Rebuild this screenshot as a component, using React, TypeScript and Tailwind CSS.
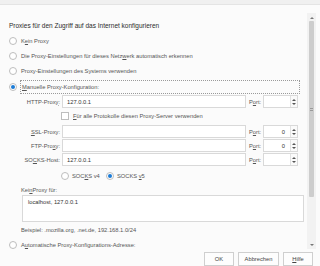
import React from "react";

const Radio = ({ checked = false }: { checked?: boolean }) => (
  <span className="flex h-[8px] w-[8px] shrink-0 items-center justify-center rounded-full border border-[#bdbdbd] bg-white">
    {checked && <span className="h-[4px] w-[4px] rounded-full bg-[#1b7bd6]" />}
  </span>
);

const Spinner = () => (
  <span className="flex h-full w-[7px] flex-col items-center justify-center gap-[2px] border-l border-[#e2e2e2] bg-[#fafafa]">
    <span className="h-0 w-0 border-x-[2px] border-b-[2px] border-x-transparent border-b-[#555]" />
    <span className="h-0 w-0 border-x-[2px] border-t-[2px] border-x-transparent border-t-[#555]" />
  </span>
);

const U = ({ children }: { children: React.ReactNode }) => (
  <u className="decoration-[0.5px] underline-offset-1">{children}</u>
);

const ProxyRow = ({
  label,
  value = "",
  port = "",
}: {
  label: React.ReactNode;
  value?: string;
  port?: string;
}) => (
  <div className="mt-[1px] flex h-[13px] items-center">
    <span className="w-[51px] text-right">{label}</span>
    <span className="ml-[2px] flex h-full w-[184px] items-center border border-[#d9d9d9] bg-white pl-[4px] text-[#333]">
      {value}
    </span>
    <span className="ml-[3px] w-[14px]">
      P<U>o</U>rt:
    </span>
    <span className="flex h-full w-[35px] items-center border border-[#d9d9d9] bg-white">
      <span className="flex-1 pr-[5px] text-right text-[#333]">{port}</span>
      <Spinner />
    </span>
  </div>
);

export default function App() {
  return (
    <div className="flex h-[266px] w-[320px] flex-col overflow-hidden bg-[#fbfbfb] font-['Liberation_Sans',Arial,sans-serif] text-[5.75px] leading-[8px] text-[#555]">
      <div className="h-[5px] shrink-0 border-b border-[#e4e4e4] bg-[#f0f0f0]" />

      <div className="flex h-[246px] shrink-0">
        <div className="flex-1 overflow-hidden pl-[9px]">
          <div className="mt-[14px] flex h-[14px] items-center text-[6.5px] text-[#2b2b2b]">
            Proxies für den Zugriff auf das Internet konfigurieren
          </div>

          <div className="flex h-[15px] items-center gap-[4px]">
            <Radio />
            <span>
              K<U>e</U>in Proxy
            </span>
          </div>
          <div className="flex h-[15px] items-center gap-[4px]">
            <Radio />
            <span>
              Die Proxy-Einstellungen für dieses Netz<U>w</U>erk automatisch erkennen
            </span>
          </div>
          <div className="flex h-[15px] items-center gap-[4px]">
            <Radio />
            <span>Proxy-Einstellungen des Systems verwenden</span>
          </div>
          <div className="mt-[2px] flex h-[14px] items-center gap-[3px]">
            <Radio checked />
            <span className="flex h-full w-[280px] items-center border border-dotted border-[#9a9a9a] pl-[1px]">
              <U>M</U>anuelle Proxy-Konfiguration:
            </span>
          </div>

          <ProxyRow
            label={
              <>
                HTTP-Prox<U>y</U>:
              </>
            }
            value="127.0.0.1"
          />
          <div className="flex h-[16px] items-center gap-[4px] pl-[52px]">
            <span className="h-[8px] w-[8px] border border-[#bdbdbd] bg-white" />
            <span>
              <U>F</U>ür alle Protokolle diesen Proxy-Server verwenden
            </span>
          </div>
          <ProxyRow
            label={
              <>
                <U>S</U>SL-Proxy:
              </>
            }
            port="0"
          />
          <ProxyRow
            label={
              <>
                FTP-Pro<U>x</U>y:
              </>
            }
            port="0"
          />
          <ProxyRow
            label={
              <>
                SO<U>C</U>KS-Host:
              </>
            }
            value="127.0.0.1"
          />

          <div className="mt-[2px] flex h-[16px] items-center pl-[52px]">
            <Radio />
            <span className="ml-[3px] w-[34px]">
              SOC<U>K</U>S v4
            </span>
            <Radio checked />
            <span className="ml-[3px]">
              SOCKS <U>v</U>5
            </span>
          </div>

          <div className="flex h-[11px] items-center pl-[12px]">
            Kei<U>n</U> Proxy für:
          </div>
          <div className="ml-[13px] h-[27px] w-[282px] border border-[#d9d9d9] bg-white px-[5px] pt-[2px] text-[#333]">
            localhost, 127.0.0.1
          </div>
          <div className="flex h-[15px] items-center pl-[12px]">
            Beispiel: .mozilla.org, .net.de, 192.168.1.0/24
          </div>
          <div className="flex h-[15px] items-center gap-[4px]">
            <Radio />
            <span>
              A<U>u</U>tomatische Proxy-Konfigurations-Adresse:
            </span>
          </div>
        </div>

        <div className="mr-[4px] mt-[8px] flex h-[236px] w-[9px] flex-col items-center bg-[#f2f2f2]">
          <span className="mt-[4px] h-0 w-0 border-x-[2px] border-b-[2px] border-x-transparent border-b-[#777]" />
          <div className="mt-[2px] flex h-[176px] w-[5px] items-center justify-center rounded-[1px] bg-[#cdcdcd]">
            <span className="h-[3px] w-[3px] border-y border-[#999]" />
          </div>
          <span className="mt-auto mb-[3px] h-0 w-0 border-x-[2px] border-t-[2px] border-x-transparent border-t-[#777]" />
        </div>
      </div>

      <div className="flex h-[15px] shrink-0 justify-end gap-[4px] pr-[7px] pt-[1px]">
        <button className="h-[14px] w-[30px] border border-[#cfcfcf] bg-[#fdfdfd] text-[5.75px] leading-[12px] text-[#444]">
          OK
        </button>
        <button className="h-[14px] w-[41px] border border-[#cfcfcf] bg-[#fdfdfd] text-[5.75px] leading-[12px] text-[#444]">
          Abbrechen
        </button>
        <button className="h-[14px] w-[30px] border border-[#cfcfcf] bg-[#fdfdfd] text-[5.75px] leading-[12px] text-[#444]">
          <U>H</U>ilfe
        </button>
      </div>
    </div>
  );
}
